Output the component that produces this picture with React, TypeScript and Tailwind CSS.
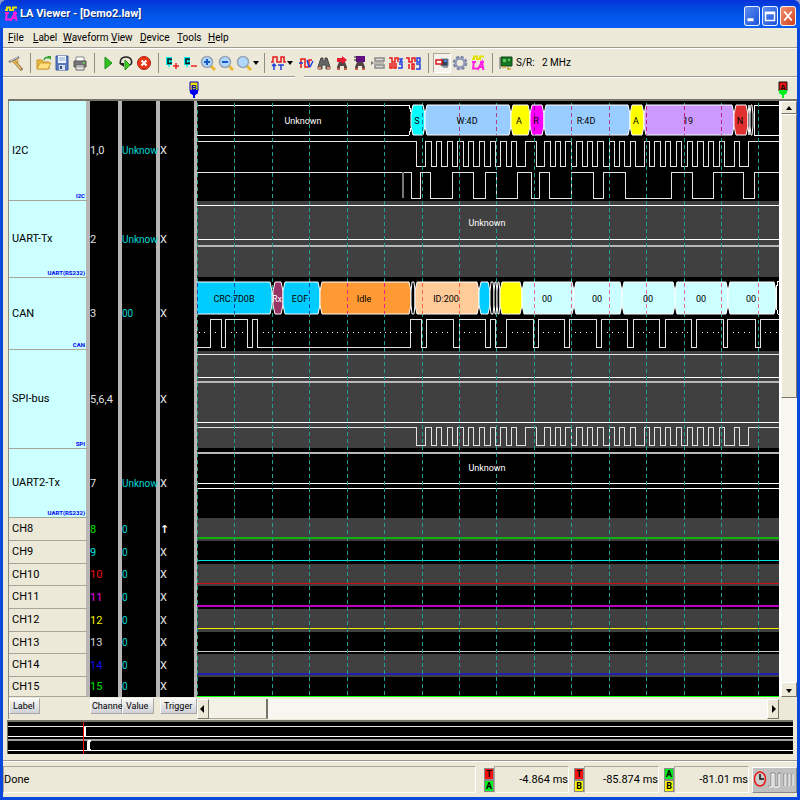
import React from "react";

const uiFont = "font-[Roboto,'Liberation_Sans',sans-serif]";

/* ---------- signal data ---------- */

type Channel = {
  name: string;
  tag?: string;
  channel: string;
  color: string;
  value: string;
  trigger: string;
  height: number;
};

const channels: Channel[] = [
  { name: "I2C", tag: "I2C", channel: "1,0", color: "text-[#e0e0e0]", value: "Unknow", trigger: "X", height: 100 },
  { name: "UART-Tx", tag: "UART(RS232)", channel: "2", color: "text-[#e0e0e0]", value: "Unknow", trigger: "X", height: 77 },
  { name: "CAN", tag: "CAN", channel: "3", color: "text-[#e0e0e0]", value: "00", trigger: "X", height: 72 },
  { name: "SPI-bus", tag: "SPI", channel: "5,6,4", color: "text-[#e0e0e0]", value: "", trigger: "X", height: 99 },
  { name: "UART2-Tx", tag: "UART(RS232)", channel: "7", color: "text-[#e0e0e0]", value: "Unknow", trigger: "X", height: 69 },
  { name: "CH8", channel: "8", color: "text-[#00e000]", value: "0", trigger: "↑", height: 23 },
  { name: "CH9", channel: "9", color: "text-[#00e0e0]", value: "0", trigger: "X", height: 23 },
  { name: "CH10", channel: "10", color: "text-[#f01010]", value: "0", trigger: "X", height: 22 },
  { name: "CH11", channel: "11", color: "text-[#f000f0]", value: "0", trigger: "X", height: 23 },
  { name: "CH12", channel: "12", color: "text-[#f0f000]", value: "0", trigger: "X", height: 23 },
  { name: "CH13", channel: "13", color: "text-[#d8d8d8]", value: "0", trigger: "X", height: 22 },
  { name: "CH14", channel: "14", color: "text-[#1010f0]", value: "0", trigger: "X", height: 23 },
  { name: "CH15", channel: "15", color: "text-[#00e000]", value: "0", trigger: "X", height: 20 },
];

const FAR = 4000;

const clockEdges = [
  416, 425, 431, 436, 441, 447, 452, 457, 463, 468, 473, 479, 484, 490, 495, 500, 506, 511, 516, 525, 536, 544, 550,
  555, 560, 565, 571, 576, 582, 587, 592, 597, 603, 609, 614, 619, 624, 630, 635, 644, 649, 654, 660, 665, 670, 676,
  681, 687, 692, 697, 703, 708, 713, 719, 724, 734, 739, 748,
];
const dataEdges = [
  411, 420, 430, 452, 473, 485, 496, 517, 531, 539, 549, 571, 593, 603, 625, 671, 692, 713, 743, 754,
];
const canEdges = [
  210, 221, 225, 247, 252, 257, 410, 421, 426, 453, 459, 485, 490, 495, 506, 533, 538, 564, 569, 596, 601, 627, 633,
  659, 665, 691, 696, 723, 727, 755, 760,
];
const dotRuns: [number, number][] = [
  [199, 2], [215, 1], [231, 3], [263, 29], [431, 4], [464, 4], [501, 1], [512, 4], [543, 4], [575, 4], [607, 4],
  [638, 4], [671, 4], [702, 4], [733, 4], [765, 3],
];

function squareWave(edges: number[], high: number, low: number, startHigh: boolean) {
  let level = startHigh ? high : low;
  let d = `M197 ${level}`;
  for (const x of edges) {
    d += `H${x}`;
    level = level === high ? low : high;
    d += `V${level}`;
  }
  return `${d}H${FAR}`;
}

type Segment = { from: number; to: number; fill: string; grid?: string; text?: string; at?: number; ink?: string };

const i2cSegments: Segment[] = [
  { from: 411, to: 425, fill: "#00ffff", text: "S", at: 417, grid: "#008090" },
  { from: 425, to: 511, fill: "#99ccff", text: "W:4D", at: 467, grid: "#b04080" },
  { from: 511, to: 530, fill: "#ffff00", text: "A", at: 519 },
  { from: 530, to: 544, fill: "#ff00ff", text: "R", at: 536, grid: "#a000a0" },
  { from: 544, to: 630, fill: "#99ccff", text: "R:4D", at: 586, grid: "#b04080" },
  { from: 630, to: 644, fill: "#ffff00", text: "A", at: 636 },
  { from: 644, to: 734, fill: "#cc99ff", text: "19", at: 688, grid: "#c02080" },
  { from: 734, to: 748, fill: "#e03030", text: "N", at: 740 },
  { from: 748, to: 750, fill: "#000" },
  { from: 750, to: 753, fill: "#000" },
];
const canSegments: Segment[] = [
  { from: 194, to: 272, fill: "#00ccff", text: "CRC:7D0B", at: 234, grid: "#1050a0" },
  { from: 273, to: 283, fill: "#993366", text: "Rx", at: 277, ink: "#fff" },
  { from: 283, to: 320, fill: "#00ccff", text: "EOF", at: 300, grid: "#1050a0" },
  { from: 320, to: 411, fill: "#ff9933", text: "Idle", at: 364, grid: "#e8208f" },
  { from: 411, to: 415, fill: "#000" },
  { from: 415, to: 479, fill: "#ffcc99", text: "ID:200", at: 446, grid: "#ff6040" },
  { from: 479, to: 490, fill: "#00ccff" },
  { from: 490, to: 494, fill: "#000" },
  { from: 494, to: 497, fill: "#000" },
  { from: 497, to: 500, fill: "#000" },
  { from: 500, to: 522, fill: "#ffff00" },
  { from: 522, to: 574, fill: "#ccffff", text: "00", at: 547, grid: "#e07090" },
  { from: 574, to: 622, fill: "#ccffff", text: "00", at: 597, grid: "#e07090" },
  { from: 622, to: 675, fill: "#ccffff", text: "00", at: 648, grid: "#e07090" },
  { from: 675, to: 728, fill: "#ccffff", text: "00", at: 701, grid: "#e07090" },
  { from: 728, to: 776, fill: "#ccffff", text: "00", at: 751, grid: "#e07090" },
];

const gridLines = Array.from({ length: 100 }, (_, i) => Math.round(197 + i * 37.43));

function BusSegment({ seg, top, bottom }: { seg: Segment; top: number; bottom: number }) {
  const { from, to } = seg;
  const mid = (top + bottom) / 2;
  const n = to - from > 6 ? 2 : 1;
  return (
    <g>
      <path
        d={`M${from} ${top + 9}L${from + n} ${top}H${to - n}L${to} ${top + 9}V${bottom - 9}L${to - n} ${bottom}H${from + n}L${from} ${bottom - 9}Z`}
        fill={seg.fill}
        stroke="#fff"
        strokeWidth="1"
      />
      {seg.grid &&
        gridLines
          .filter((x) => x > from && x < to)
          .map((x) => (
            <path key={x} d={`M${x} ${top + 1}V${bottom}`} stroke={seg.grid} strokeDasharray="4 3" shapeRendering="crispEdges" />
          ))}
      {seg.text && <WaveText x={seg.at ?? mid} y={mid + 4} ink={seg.ink ?? "#000"}>{seg.text}</WaveText>}
    </g>
  );
}

function WaveText({ x, y, ink, children }: { x: number; y: number; ink: string; children: React.ReactNode }) {
  return (
    <text x={x} y={y} fill={ink} textAnchor="middle" className="font-[Roboto,sans-serif] text-[9px]">
      {children}
    </text>
  );
}

function Waveforms() {
  const bands: [number, number][] = [[201, 277], [351, 448], [518, 541], [564, 586], [609, 632], [654, 677]];
  const lines: [number, string, number][] = [
    [205, "#fff", 1], [239, "#fff", 1], [245, "#b8b8b8", 2],
    [354, "#e8e8e8", 1], [377, "#fff", 1], [381, "#b8b8b8", 2], [422, "#fff", 1],
    [452, "#b8b8b8", 2], [483, "#fff", 1], [488, "#fff", 1],
    [537, "#10b010", 2], [560, "#00e0e0", 1], [583, "#d01010", 1], [605, "#c000c0", 2],
    [628, "#f0f000", 1], [651, "#c8c8c8", 1], [673, "#2020b0", 2], [696, "#00ff00", 1],
  ];
  return (
    <svg className="block h-[596px] w-full bg-black" role="img" aria-label="Captured waveforms">
      <g transform="translate(-197 -101)">
        <g shapeRendering="crispEdges">
          {bands.map(([a, b]) => (
            <rect key={a} x="197" y={a} width={FAR} height={b - a} fill="#404040" />
          ))}
          {lines.map(([y, color, h]) => (
            <rect key={y} x="197" y={y} width={FAR} height={h} fill={color} />
          ))}
          <g fill="none" stroke="#e4e4e4">
            <path d={`M197 105H409L411 112V128L409 135H197M${FAR} 105H754V135H${FAR}`} stroke="#fff" />
            <path d={squareWave(clockEdges, 141, 166, true)} />
            <path d={squareWave(dataEdges, 172, 198, true)} />
            <path d="M403 172V198" stroke="#777" strokeWidth="2" />
            <path d={squareWave(canEdges, 319, 347, false)} />
            <path d={squareWave(clockEdges, 427, 445, true)} />
            <path d={`M${FAR} 281H778L776 290V305L778 314H${FAR}`} stroke="#fff" />
          </g>
          {dotRuns.flatMap(([x, n]) =>
            Array.from({ length: n }, (_, i) => (
              <rect key={`${x}-${i}`} x={Math.round(x + i * 5.3)} y="332" width="1" height="1" fill="#fff" />
            )),
          )}
          {gridLines.map((x) => (
            <path key={x} d={`M${x} 103V697`} stroke="#22a08e" strokeDasharray="4 3" />
          ))}
        </g>
        {i2cSegments.map((s) => (
          <BusSegment key={s.from} seg={s} top={105} bottom={135} />
        ))}
        {canSegments.map((s) => (
          <BusSegment key={s.from} seg={s} top={282} bottom={314} />
        ))}
        <WaveText x={303} y={124} ink="#fff">Unknown</WaveText>
        <WaveText x={487} y={226} ink="#fff">Unknown</WaveText>
        <WaveText x={487} y={471} ink="#fff">Unknown</WaveText>
      </g>
    </svg>
  );
}

/* ---------- icons ---------- */

function Icon({ children, size = "size-4" }: { children: React.ReactNode; size?: string }) {
  return (
    <svg viewBox="0 0 16 16" className={`${size} shrink-0`} fill="none" aria-hidden="true">
      {children}
    </svg>
  );
}

const LaMark = () => (
  <Icon>
    <path d="M2 4h2V1.500h3V4h3V1.500h4" stroke="#e8e000" strokeWidth="2" />
    <path d="M4 6L3 13.500h5M7.500 15L12 7l1.500 8M9.500 12h4M2 7h4M10 7h4" stroke="#ff20e0" strokeWidth="2" />
  </Icon>
);

const Wand = () => (
  <Icon>
    <path d="M6 6l8 9" stroke="#8a6a40" strokeWidth="3" />
    <path d="M6 6l7 8" stroke="#f0c868" strokeWidth="1.500" />
    <path d="M1 7l10-5" stroke="#777" strokeWidth="2.500" />
    <path d="M2 6l8-4" stroke="#ddd" strokeWidth="1" />
    <path d="M4 6l4 3M9 4l1 4" stroke="#e0a030" strokeWidth="1.500" />
  </Icon>
);
const Folder = () => (
  <Icon>
    <path d="M1 14V5h5l1 2h6v7z" fill="#e8b840" stroke="#c89020" />
    <path d="M1 14l3-6h11l-3 6z" fill="#ffe080" stroke="#d0a030" />
    <path d="M8 5c1-3 3-3 5-2" stroke="#30a030" strokeWidth="1.500" />
    <path d="M11 1h4v4z" fill="#30a030" />
  </Icon>
);
const Save = () => (
  <Icon>
    <path d="M2 1h12v14H2z" fill="#5878c0" stroke="#3858a0" />
    <path d="M4 1h8v7H4z" fill="#eef4ff" />
    <path d="M5 3h6M5 5h6" stroke="#90a8d0" />
    <path d="M5 10h6v5H5z" fill="#d8e0f0" />
    <path d="M6 11h2v3H6z" fill="#304880" />
  </Icon>
);
const Print = () => (
  <Icon>
    <path d="M4 2h8v5H4z" fill="#fff" stroke="#888" />
    <path d="M2 6h12v6H2z" fill="#777" stroke="#555" />
    <path d="M4 10h8v5H4z" fill="#f4f4f4" stroke="#666" />
    <path d="M5 12h6" stroke="#888" />
    <circle cx="12" cy="8" r="1" fill="#60e040" />
  </Icon>
);
const Play = () => (
  <Icon>
    <path d="M5 2l7 6-7 6z" fill="#30c020" stroke="#189018" />
  </Icon>
);
const Loop = () => (
  <Icon>
    <path d="M7 5l5 5-5 5z" fill="#40d020" stroke="#189018" />
    <path d="M4 10C1 8 2 2 8 2s7 6 4 8" stroke="#222" strokeWidth="1.500" />
    <path d="M1 8h5v4z" fill="#222" />
  </Icon>
);
const Stop = () => (
  <Icon>
    <circle cx="8" cy="8" r="6.500" fill="#e83818" stroke="#b02010" />
    <path d="M5.500 5.500l5 5M10.500 5.500l-5 5" stroke="#fff" strokeWidth="2" />
  </Icon>
);
const CursorMark = ({ plus }: { plus: boolean }) => (
  <Icon>
    <path d="M2 2h6v8H6l-1 3-1-3H2z" fill="#00f0f0" />
    <path d="M7 5.500V4H4v4.500h3V7" stroke="#111" strokeWidth="1.500" />
    <path d={plus ? "M9 11h6M12 8v6" : "M9 11h6"} stroke="#f02020" strokeWidth="1.500" />
  </Icon>
);
const Magnifier = ({ d }: { d: string }) => (
  <Icon>
    <path d="M11 11l4 4" stroke="#e8b830" strokeWidth="3" />
    <circle cx="7" cy="7" r="5.500" fill="#b0d8fc" stroke="#98a4b4" strokeWidth="1.500" />
    <path d={d} stroke="#1858c8" strokeWidth="2" />
  </Icon>
);
const WaveT = () => (
  <Icon>
    <path d="M1 7h2V2h4v5h4V2h3v5h2" stroke="#e81818" strokeWidth="1.500" />
    <path d="M4 15V9M2 11l2-2 2 2M8 10h6M11 10v5" stroke="#2040e0" strokeWidth="1.500" />
  </Icon>
);
const Pulses = () => (
  <Icon>
    <path d="M3 13V4h4v8h4V5h3" stroke="#e81818" strokeWidth="1.500" />
    <path d="M1 8h4M9 5l2 7M12 12l3-6" stroke="#2040e0" strokeWidth="1.500" />
  </Icon>
);
const Binoculars = () => (
  <Icon>
    <path d="M5 3h2v3h2V3h2l3 9v2h-4v-4H6v4H2v-2z" fill="#666" stroke="#444" />
    <path d="M2 12h3v2H2zM11 12h3v2h-3z" fill="#e88860" />
  </Icon>
);
const Finder = () => (
  <Icon>
    <path d="M5 7h6l2 5v3h-3v-4H6v4H3v-3z" fill="#554444" />
    <path d="M3 3h5V1l5 4-5 4V7H3z" fill="#e81830" />
    <path d="M3 13h3v2H3zM10 13h3v2h-3z" fill="#c06048" />
  </Icon>
);
const FinderBox = () => (
  <Icon>
    <path d="M5 7h6l2 5v3h-3v-4H6v4H3v-3z" fill="#554444" />
    <path d="M4 1h9v6H4z" fill="#601080" />
    <path d="M2 2h3M2 5h3" stroke="#222" />
    <path d="M3 13h3v2H3zM10 13h3v2h-3z" fill="#c06048" />
  </Icon>
);
const ListBox = () => (
  <Icon>
    <path d="M5 3h9v3H5zM5 10h9v3H5z" stroke="#888" fill="#ddd" strokeWidth="1.500" />
    <path d="M1 6l3 2-3 2z" fill="#777" />
    <path d="M4 8h10" stroke="#888" />
  </Icon>
);
const BitsA = () => (
  <Icon>
    <path d="M1 3h3v4h3V3h3v4M2 8v5h2V8M6 8v5h2V8" stroke="#e81818" strokeWidth="1.500" />
    <path d="M11 4h3l-2 3h3M11 9h3v4h-4" stroke="#2040e0" strokeWidth="1.500" />
  </Icon>
);
const BitsB = () => (
  <Icon>
    <path d="M0 3h3v4h3V3h3v4M3 9v5M6 9h2v5H6z" stroke="#e81818" strokeWidth="1.500" />
    <path d="M11 3h3v4h-3zM10 9h4v5h-4" stroke="#2040e0" strokeWidth="1.500" />
  </Icon>
);
const Probe = () => (
  <Icon>
    <path d="M7 4h7v7H7z" fill="#345" stroke="#789" />
    <path d="M9 12h5" stroke="#889" strokeWidth="1.500" />
    <path d="M2 5h6v4H2z" fill="#fff" stroke="#d81818" strokeWidth="1.500" />
    <path d="M10 6h3" stroke="#5080e0" strokeWidth="2" />
  </Icon>
);
const Gear = () => (
  <Icon>
    <circle cx="8" cy="8" r="6" stroke="#7880a0" strokeWidth="2.500" strokeDasharray="3 1.700" />
    <circle cx="8" cy="8" r="4.500" stroke="#9098b8" strokeWidth="2.500" />
  </Icon>
);
const Chip = () => (
  <Icon>
    <path d="M3 2h11v9H3z" fill="#187828" stroke="#0c4814" />
    <path d="M5 4h3v3H5zM10 4h2v2h-2z" fill="#60c860" />
    <path d="M4 12h4M10 12v2h3" stroke="#c8a030" strokeWidth="1.500" />
    <path d="M2 2v12" stroke="#666" />
  </Icon>
);

function Tool({ label, pressed, children }: { label: string; pressed?: boolean; children: React.ReactNode }) {
  return (
    <button
      type="button"
      aria-label={label}
      className={`flex h-5 w-[18px] shrink-0 items-center justify-center ${
        pressed ? "border border-t-[#aca899] border-l-[#aca899] border-r-white border-b-white bg-[#f4f2ea]" : ""
      }`}
    >
      {children}
    </button>
  );
}

function Divider() {
  return (
    <span className="flex w-[10px] shrink-0 justify-center">
      <span className="h-5 w-px bg-[#8f8d80]" />
    </span>
  );
}

function DropArrow() {
  return (
    <svg viewBox="0 0 6 4" className="h-1 w-1.5 shrink-0" aria-hidden="true">
      <path d="M0 0h6L3 4z" fill="#000" />
    </svg>
  );
}

function Toolbar() {
  return (
    <div className="flex h-[27px] items-center overflow-hidden pl-1">
      <Tool label="Wizard"><Wand /></Tool>
      <Divider />
      <Tool label="Open"><Folder /></Tool>
      <Tool label="Save"><Save /></Tool>
      <Tool label="Print"><Print /></Tool>
      <Divider />
      <Tool label="Run"><Play /></Tool>
      <Tool label="Repeat run"><Loop /></Tool>
      <Tool label="Stop"><Stop /></Tool>
      <Divider />
      <Tool label="Add cursor"><CursorMark plus /></Tool>
      <Tool label="Remove cursor"><CursorMark plus={false} /></Tool>
      <Tool label="Zoom in"><Magnifier d="M4 7h6M7 4v6" /></Tool>
      <Tool label="Zoom out"><Magnifier d="M4 7h6" /></Tool>
      <Tool label="Zoom"><Magnifier d="" /></Tool>
      <DropArrow />
      <Divider />
      <Tool label="Go to trigger"><WaveT /></Tool>
      <DropArrow />
      <span className="w-1 shrink-0" />
      <Tool label="Pulse width"><Pulses /></Tool>
      <Tool label="Find"><Binoculars /></Tool>
      <Tool label="Find next"><Finder /></Tool>
      <Tool label="Find pattern"><FinderBox /></Tool>
      <Tool label="Group"><ListBox /></Tool>
      <Tool label="Bus decode"><BitsA /></Tool>
      <Tool label="Bit decode"><BitsB /></Tool>
      <Divider />
      <Tool label="Probe" pressed><Probe /></Tool>
      <Tool label="Settings"><Gear /></Tool>
      <Tool label="Analyzer"><LaMark /></Tool>
      <Divider />
      <Tool label="Sample rate"><Chip /></Tool>
      <span className="ml-px w-[26px] shrink-0 text-[10px] whitespace-nowrap">S/R:</span>
      <span className="text-[10px] whitespace-nowrap">2 MHz</span>
    </div>
  );
}

/* ---------- window chrome ---------- */

const menus: [string, string][] = [
  ["File", "w-[25px]"],
  ["Label", "w-[30px]"],
  ["Waveform", "w-12"],
  ["View", "w-[29px]"],
  ["Device", "w-[37px]"],
  ["Tools", "w-[31px]"],
  ["Help", "w-[30px]"],
];

function TitleBar() {
  const frame = "flex h-5 w-4 items-center justify-center rounded-[3px] border border-white/90";
  return (
    <header className="flex h-7 items-center rounded-t-[7px] bg-linear-to-b from-[#0831d9] via-[#0055e5] to-[#0a5cf5] pr-1 pl-[3px] text-white">
      <LaMark />
      <h1 className="ml-px flex-1 truncate text-[11px] leading-5 font-bold [text-shadow:1px_1px_0_#0a2a80]">
        LA Viewer - [Demo2.law]
      </h1>
      <div className="flex gap-[2px] pt-[3px]">
        <button type="button" aria-label="Minimize" className={`${frame} bg-linear-to-br from-[#5a8cf0] to-[#1c50d8]`}>
          <Icon size="size-3"><path d="M2 13h8" stroke="#fff" strokeWidth="4" /></Icon>
        </button>
        <button type="button" aria-label="Maximize" className={`${frame} bg-linear-to-br from-[#5a8cf0] to-[#1c50d8]`}>
          <Icon size="size-3"><path d="M2 3h12v11H2zM2 4.500h12" stroke="#fff" strokeWidth="2" /></Icon>
        </button>
        <button type="button" aria-label="Close" className={`${frame} bg-linear-to-br from-[#f09070] to-[#d03c14]`}>
          <Icon size="size-3"><path d="M3 2l10 12M13 2L3 14" stroke="#fff" strokeWidth="2.500" /></Icon>
        </button>
      </div>
    </header>
  );
}

function Groove() {
  return <div className="h-[2px] border-t border-t-[#9c9a8e] bg-white" />;
}

function Pin({ letter, head, tip, ink }: { letter: string; head: string; tip: string; ink: string }) {
  return (
    <svg viewBox="0 0 10 17" className="h-[17px] w-[10px]" role="img" aria-label={`Cursor ${letter}`}>
      <path d="M1 8h8v4L6 14v3H4v-3L1 12z" fill={tip} />
      <path d="M1 1h8v9H1z" fill={head} stroke={ink} strokeWidth="1" />
      <path d="M1 9h8v3L6 14H4L1 12z" fill={tip} />
      <text x="5" y="9" textAnchor="middle" fill={ink} className="font-['Liberation_Sans',sans-serif] text-[8px] font-bold">
        {letter}
      </text>
    </svg>
  );
}

/* ---------- signal list ---------- */

const sep = "border-r-4 border-r-[#b8b6b4] bg-black p-0";
const head =
  "block h-4 border border-t-white border-l-white border-r-[#aaa8a4] border-b-[#aaa8a4] bg-linear-to-b from-[#f8f8f4] to-[#d0d0d8] text-left text-[9px] leading-[14px] whitespace-nowrap";

function SignalTable() {
  return (
    <table className="w-[189px] shrink-0 table-fixed border-separate border-spacing-0 border-l border-l-[#8c8a80]">
      <colgroup>
        <col className="w-[81px]" />
        <col className="w-8" />
        <col className="w-[38px]" />
        <col className="w-[37px]" />
      </colgroup>
      <tbody>
        {channels.map((c) => (
          <tr key={c.name} style={{ height: c.height }}>
            <th
              scope="row"
              className={`relative border-r-4 border-b border-r-[#b8b6b4] border-b-[#a8a69a] p-0 pl-[3px] text-left font-normal ${
                c.tag ? "bg-[#ccffff]" : "bg-[#ece9d8]"
              }`}
            >
              {c.name}
              {c.tag && (
                <span className="absolute right-px bottom-0 font-[Roboto,sans-serif] text-[6px] leading-2 font-bold text-[#0000f0]">
                  {c.tag}
                </span>
              )}
            </th>
            <td className={`${sep} ${c.color}`}>{c.channel}</td>
            <td className={`${sep} text-[10px] whitespace-nowrap text-[#00d8d8]`}>{c.value}</td>
            <td className={`border-r-3 border-r-[#b8b6b4] bg-black p-0 text-[#e0e0e0] ${c.trigger === "X" ? "" : "font-['DejaVu_Sans',sans-serif] font-bold text-white"}`}>
              {c.trigger}
            </td>
          </tr>
        ))}
      </tbody>
      <tfoot>
        <tr className="h-[22px]">
          <td className="p-0 pt-px align-top"><button type="button" className={`${head} w-[31px] pl-[3px]`}>Label</button></td>
          <td className="p-0 pt-px align-top"><button type="button" className={`${head} w-8 pl-px`}>Channe</button></td>
          <td className="p-0 pt-px align-top"><button type="button" className={`${head} w-8 pl-[3px]`}>Value</button></td>
          <td className="p-0 pt-px align-top"><button type="button" className={`${head} w-[37px] pl-[3px]`}>Trigger</button></td>
        </tr>
      </tfoot>
    </table>
  );
}

/* ---------- scroll bars ---------- */

const raised = "border border-t-white border-l-white border-r-[#77756a] border-b-[#77756a] bg-[#ece9d8]";

function ScrollButton({ label, d, size }: { label: string; d: string; size: string }) {
  return (
    <button type="button" aria-label={label} className={`flex shrink-0 items-center justify-center ${size} ${raised}`}>
      <svg viewBox="0 0 8 8" className="size-2 shrink-0" aria-hidden="true"><path d={d} fill="#000" /></svg>
    </button>
  );
}

/* ---------- overview and status ---------- */

function Overview() {
  return (
    <div className="mr-1 ml-1 border-t-2 border-l border-[#77756a]">
      <svg className="block h-8 w-full bg-black" shapeRendering="crispEdges" role="img" aria-label="Capture overview">
        <rect y="4" width="100%" height="1" fill="#e8e8e8" />
        <rect y="14" width="100%" height="1" fill="#fff" />
        <rect y="17" width="100%" height="2" fill="#a0a0a0" />
        <rect y="28" width="100%" height="1" fill="#fff" />
        <rect x="75" y="0" width="1" height="32" fill="#f01010" />
        <path d="M76 5h2v9h-2M80 18h3v2h-1v7h1v2h-4v-9z" fill="#fff" />
      </svg>
    </div>
  );
}

function CursorPair({ top, bottom, topBg, bottomBg }: { top: string; bottom: string; topBg: string; bottomBg: string }) {
  const cell = "flex h-3 items-center justify-center border border-[#888] text-[9px] font-bold";
  return (
    <div className="w-[10px] shrink-0">
      <div className={`${cell} ${topBg}`}>{top}</div>
      <div className={`${cell} ${bottomBg}`}>{bottom}</div>
    </div>
  );
}

const sunken = "flex h-[27px] items-center border border-t-[#aca899] border-l-[#aca899] border-r-white border-b-white";

function StatusBar() {
  return (
    <footer className="flex h-[35px] items-center">
      <div className={`${sunken} mr-2 flex-1`}>Done</div>
      <CursorPair top="T" bottom="A" topBg="bg-[#f81010]" bottomBg="bg-[#00f020]" />
      <div className={`${sunken} mr-[5px] w-[75px] justify-end`}>-4.864 ms</div>
      <CursorPair top="T" bottom="B" topBg="bg-[#f81010]" bottomBg="bg-[#f8f800]" />
      <div className={`${sunken} mr-[5px] w-[75px] justify-end`}>-85.874 ms</div>
      <CursorPair top="A" bottom="B" topBg="bg-[#00f020]" bottomBg="bg-[#f8f800]" />
      <div className={`${sunken} mr-[3px] w-[75px] justify-end`}>-81.01 ms</div>
      <button type="button" aria-label="Time format" className="flex h-[26px] w-[45px] items-center border border-t-white border-l-white border-r-[#888] border-b-[#888] bg-[#c0c0c0]">
        <svg viewBox="0 0 43 24" className="h-6 w-[43px]" fill="none" aria-hidden="true">
          <ellipse cx="7" cy="11" rx="5.500" ry="7" fill="#ccc" stroke="#e81818" strokeWidth="1.500" />
          <path d="M7 6v5h4" stroke="#111" strokeWidth="1.500" />
          <path d="M15 18h3V5h4v13h3V5h3" stroke="#888" />
          <path d="M16 19h3V6h2v13h5V6" stroke="#fff" />
          <path d="M31 6v12M35 6v12M39 6v12M30 6h2M34 6h2M38 6h2" stroke="#888" />
          <path d="M32 6v12M36 6v12M40 6v12" stroke="#fff" />
        </svg>
      </button>
    </footer>
  );
}

/* ---------- application ---------- */

export default function App() {
  return (
    <div className={`bg-[#8f9ad0] ${uiFont} text-[11px] leading-4 text-black`}>
      <div className="flex min-h-screen flex-col rounded-t-[7px] bg-[#0848dc]">
        <TitleBar />
        <div className="mx-[3px] mb-[3px] flex flex-1 flex-col bg-[#ece9d8]">
          <nav className="flex h-[19px] items-center pl-[5px] text-[10px]">
            {menus.map(([name, width]) => (
              <button key={name} type="button" className={`${width} text-left`}>
                <span className="underline">{name[0]}</span>
                {name.slice(1)}
              </button>
            ))}
          </nav>
          <Groove />
          <Toolbar />
          <div className="flex gap-[9px]">
            <div className="w-[292px]"><Groove /></div>
            <div className="flex-1"><Groove /></div>
          </div>
          <div className="flex h-[21px] items-end justify-between pr-[9px] pb-px pl-[186px]">
            <Pin letter="B" head="#f0e000" tip="#0000f0" ink="#0000c0" />
            <Pin letter="A" head="#e81010" tip="#00f020" ink="#111" />
          </div>
          <main className="ml-[5px] border-t-2 border-t-[#77756a]">
            <div className="flex">
              <SignalTable />
              <div className="min-w-0 flex-1">
                <Waveforms />
                <div className="mt-[2px] flex h-5 bg-[#f8f6f0]">
                  <ScrollButton label="Scroll left" d="M5 0v8L1 4z" size="w-3" />
                  <div className="w-[59px] border-r-2 border-r-[#77756a] border-b border-b-[#aca899] bg-[#f4f1e6]" />
                  <div className="flex-1" />
                  <ScrollButton label="Scroll right" d="M3 0v8l4-4z" size="w-3" />
                </div>
              </div>
              <div className="flex h-[596px] w-[18px] flex-col border-l-2 border-l-white bg-[#f8f6f0]">
                <ScrollButton label="Scroll up" d="M1 6h6L4 2z" size="h-[13px]" />
                <div className={`h-[284px] ${raised}`} />
                <div className="flex-1" />
                <ScrollButton label="Scroll down" d="M1 3h6L4 7z" size="h-[15px]" />
              </div>
            </div>
          </main>
          <div className="mt-px"><Overview /></div>
          <div className="flex-1" />
          <Groove />
          <StatusBar />
        </div>
      </div>
    </div>
  );
}
